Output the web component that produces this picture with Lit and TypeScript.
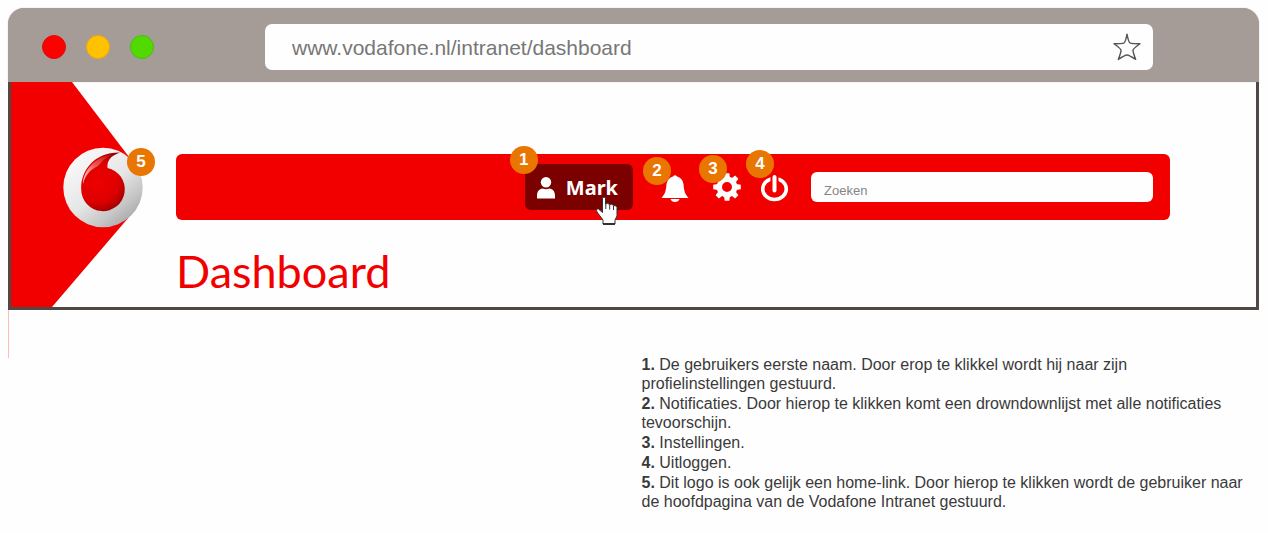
import { LitElement, html, css, svg } from "lit";
import { customElement } from "lit/decorators.js";

const TEETH = [0, 45, 90, 135, 180, 225, 270, 315];

@customElement("app-root")
export class AppRoot extends LitElement {
  static styles = css`
    :host {
      display: block;
      box-sizing: border-box;
      min-height: 100vh;
      padding: 8px 9px 8px 8px;
      background: #fefefe;
      color: #3a3a3a;
      font-family: "Liberation Sans", Arial, sans-serif;
    }
    * {
      box-sizing: border-box;
    }
    .chrome {
      display: flex;
      align-items: center;
      height: 74px;
      padding: 0 106px 0 34px;
      border-radius: 16px 16px 0 0;
      background: #a59c97;
      box-shadow: 0 0 1px #a59c97;
    }
    .lights {
      display: flex;
      gap: 20px;
      margin-right: 111px;
      padding-top: 4px;
    }
    .light {
      width: 24px;
      height: 24px;
      border: 1px solid #dc0d08;
      border-radius: 50%;
      background: #ff0000;
    }
    .amber {
      border-color: #f2a60a;
      background: #ffc200;
    }
    .green {
      border-color: #45c00c;
      background: #52d900;
    }
    .address {
      display: flex;
      flex: 1;
      align-items: center;
      height: 46px;
      margin-top: 4px;
      padding: 0 12px 0 27px;
      border-radius: 7px;
      background: #fefefe;
    }
    input {
      min-width: 0;
      border: 0;
      outline: 0;
      background: #fefefe;
      font-family: inherit;
    }
    .url {
      flex: 1;
      padding: 2px 0 0;
      color: #777;
      font-size: 21px;
      line-height: 24px;
    }
    button {
      padding: 0;
      border: 0;
      background: none;
      cursor: pointer;
    }
    svg {
      display: block;
    }
    .frame {
      display: flex;
      border: 3px solid #4f4844;
      border-top: 0;
    }
    .brand {
      position: relative;
      flex: none;
      width: 141px;
    }
    .content {
      flex: 1;
      min-width: 0;
      padding: 72px 86px 0 24px;
    }
    .bar {
      display: flex;
      align-items: center;
      justify-content: flex-end;
      gap: 20px;
      height: 66px;
      padding: 0 17px;
      border-radius: 6px;
      background: #f20000;
    }
    .user {
      position: relative;
      display: flex;
      align-items: center;
      gap: 11px;
      height: 46px;
      margin-right: 8px;
      padding: 2px 15px 0 12px;
      border-radius: 6px;
      background: #7b0000;
      color: #fff;
      font: 700 20px/32px "Noto Sans", sans-serif;
      text-decoration: none;
    }
    .tool {
      position: relative;
      width: 30px;
      height: 30px;
    }
    .search {
      flex: 0 1 342px;
      height: 30px;
      padding: 7px 13px 0;
      border-radius: 6px;
      color: #777;
      font-size: 13px;
    }
    .search::placeholder {
      color: #858585;
      opacity: 1;
    }
    .badge {
      position: absolute;
      width: 28px;
      height: 28px;
      border-radius: 50%;
      background: #e87600;
      color: #fff;
      font: 700 17px/28px "Liberation Sans", Arial, sans-serif;
      text-align: center;
    }
    .b1 { left: -15px; top: -18px; }
    .b2 { left: -18px; top: -15px; }
    .b3 { left: -12px; top: -17px; }
    .b4 { left: -15px; top: -22px; }
    .b5 { left: 116px; top: 66px; }
    .pointer {
      position: absolute;
      right: 14px;
      top: 32px;
    }
    h1 {
      margin: 0;
      padding: 18px 0 2px;
      color: #f20000;
      font: 400 45px/67px Lato, "Noto Sans", sans-serif;
    }
    .below {
      display: grid;
      grid-template-columns: 1fr 1fr;
      gap: 16px;
    }
    .guide {
      width: 1px;
      height: 48px;
      background: #ffbcbc;
    }
    .notes {
      display: grid;
      gap: 1px;
      margin: 0;
      padding: 45px 8px 0 0;
      list-style: none;
      font-size: 16px;
      line-height: 19px;
    }
  `;

  private badge(n: number) {
    return html`<span class="badge b${n}">${n}</span>`;
  }

  render() {
    return html`
      <header class="chrome">
        <div class="lights">
          <span class="light"></span>
          <span class="light amber"></span>
          <span class="light green"></span>
        </div>
        <div class="address">
          <input class="url" type="text" aria-label="Adres" value="www.vodafone.nl/intranet/dashboard" />
          <button aria-label="Favoriet">
            <svg width="28" height="28" viewBox="0 0 28 28" fill="none" stroke="#555" stroke-width="1.4" stroke-linejoin="round">
              <path d="M14 1.200 Q15.500 9.500 17.200 10.100 Q19 10.700 27 10.700 Q20.300 15.500 20 17 Q19.800 19 22.700 26.400 Q16 22 14 22 Q12 22 5.300 26.400 Q8.200 19 8 17 Q7.700 15.500 1 10.700 Q9 10.700 10.800 10.100 Q12.500 9.500 14 1.200Z" />
            </svg>
          </button>
        </div>
      </header>

      <main class="frame">
        <a class="brand" href="#" aria-label="Vodafone Intranet">
          <svg width="133" height="225" viewBox="-1 0 133 225">
            <defs>
              <linearGradient id="silver" x1="0.2" y1="0.1" x2="0.85" y2="0.9">
                <stop offset="0" stop-color="#f8f8f8" />
                <stop offset="0.5" stop-color="#e6e6e6" />
                <stop offset="0.8" stop-color="#c6c6c6" />
                <stop offset="1" stop-color="#aaaaaa" />
              </linearGradient>
              <radialGradient id="drop" gradientUnits="userSpaceOnUse" cx="86" cy="100" r="32">
                <stop offset="0" stop-color="#ee0000" />
                <stop offset="0.65" stop-color="#dd0000" />
                <stop offset="1" stop-color="#980000" />
              </radialGradient>
              <linearGradient id="shine" x1="1" y1="0" x2="0" y2="1">
                <stop offset="0" stop-color="#fff" stop-opacity="0" />
                <stop offset="0.5" stop-color="#fff" stop-opacity="0.35" />
                <stop offset="1" stop-color="#fff" stop-opacity="0.9" />
              </linearGradient>
            </defs>
            <path d="M-1 0H60L117 75V135L40 225H-1Z" fill="#f20000" />
            <circle cx="91" cy="105.500" r="39.700" fill="url(#silver)" />
            <path d="M108 70.500 C98 74 95 79 95.500 86 A21.800 21.800 0 1 1 69.200 107 C68.500 88 83 70 108 70.500Z" fill="url(#drop)" />
            <path d="M102 72 C92 76 90 80 86 84 C78 88 73 93 71 102 C71 88 84 74 102 72Z" fill="url(#shine)" />
          </svg>
          ${this.badge(5)}
        </a>

        <div class="content">
          <nav class="bar">
            <a class="user" href="#">
              <svg width="18" height="22" viewBox="0 0 18 22" fill="#fff">
                <circle cx="9" cy="5.200" r="5.200" />
                <path d="M0 21.500V18.500C0 14.500 2.500 12 5.500 11.600Q9 13 12.500 11.600C15.500 12 18 14.500 18 18.500V21.500Z" />
              </svg>
              Mark
              ${this.badge(1)}
              <svg class="pointer" width="24" height="30" viewBox="0 0 24 30">
                <path d="M7.500 2Q9 0 10.500 2V8Q12.500 6.500 14.500 8.500Q17 7.500 18.500 9.500Q21 9 22 11.500V20L20 24V28H8V24L2 16Q0.500 12.500 3.500 13L7.500 16.500Z" fill="#fff" stroke="#333" stroke-width="1" />
                <path d="M10.800 8V13M14.700 9V13.500M18.500 10V14" stroke="#333" stroke-width="1" />
                <path d="M8 28H20" stroke="#111" stroke-width="1.500" />
              </svg>
            </a>
            <button class="tool" aria-label="Notificaties">
              <svg width="30" height="30" viewBox="0 0 30 30" fill="#fff">
                <path d="M12 4.500Q14 2 16 4.500Q21.500 6 22.500 12C23 19 24 22 27.500 26H0.500C4 22 5 19 5.500 12Q6.500 6 12 4.500Z" />
                <path d="M9.500 27H18.500Q17.500 30 14 30Q10.500 30 9.500 27Z" />
              </svg>
              ${this.badge(2)}
            </button>
            <button class="tool" aria-label="Instellingen">
              <svg width="30" height="30" viewBox="0 0 30 30" fill="#fff">
                <circle cx="16" cy="15" r="7.700" fill="none" stroke="#fff" stroke-width="5.400" />
                ${TEETH.map((a) => svg`<path d="M13 6L13.700 1.200H18.300L19 6Z" transform="rotate(${a} 16 15)" />`)}
              </svg>
              ${this.badge(3)}
            </button>
            <button class="tool" aria-label="Uitloggen">
              <svg width="30" height="30" viewBox="0 0 30 30">
                <ellipse cx="13.500" cy="17" rx="11.800" ry="10.500" fill="none" stroke="#fff" stroke-width="3.600" />
                <path d="M9.500 3H17.500V12H9.500Z" fill="#f20000" />
                <path d="M13.500 5V18.500" stroke="#fff" stroke-width="4" stroke-linecap="round" />
              </svg>
              ${this.badge(4)}
            </button>
            <input class="search" type="search" aria-label="Zoeken" placeholder="Zoeken" />
          </nav>
          <h1>Dashboard</h1>
        </div>
      </main>

      <section class="below">
        <div class="guide"></div>
        <ol class="notes">
          <li><b>1.</b> De gebruikers eerste naam. Door erop te klikkel wordt hij naar zijn profielinstellingen gestuurd.</li>
          <li><b>2.</b> Notificaties. Door hierop te klikken komt een drowndownlijst met alle notificaties tevoorschijn.</li>
          <li><b>3.</b> Instellingen.</li>
          <li><b>4.</b> Uitloggen.</li>
          <li><b>5.</b> Dit logo is ook gelijk een home-link. Door hierop te klikken wordt de gebruiker naar de hoofdpagina van de Vodafone Intranet gestuurd.</li>
        </ol>
      </section>
    `;
  }
}
